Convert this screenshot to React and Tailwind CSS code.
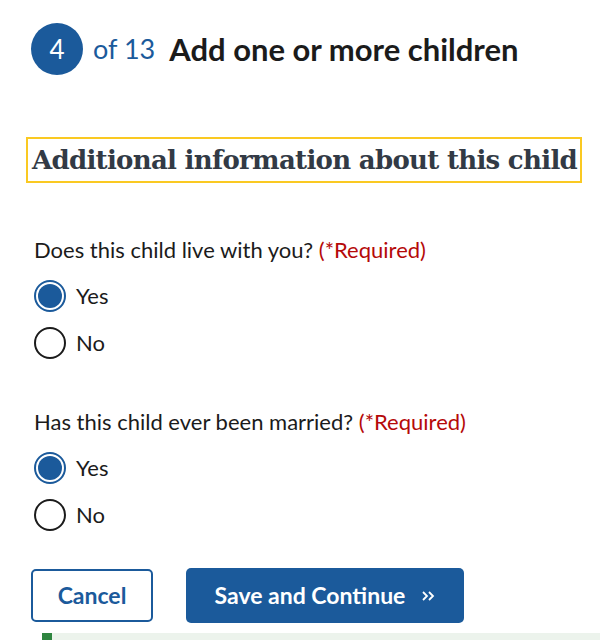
import React from "react";

const sans = { fontFamily: "Lato, 'Noto Sans', sans-serif" };

function Radio({ checked, label }) {
  return (
    <div className="flex items-center h-[47px]">
      {checked ? (
        <span className="w-[32px] h-[32px] rounded-full border-[2px] border-[#1b5a9b] flex items-center justify-center">
          <span className="w-[24px] h-[24px] rounded-full bg-[#1b5a9b]" />
        </span>
      ) : (
        <span className="w-[32px] h-[32px] rounded-full border-[2px] border-[#1b1b1b]" />
      )}
      <span className="ml-[10px] text-[22px] text-[#1b1b1b]">{label}</span>
    </div>
  );
}

function Question({ text }) {
  return (
    <div>
      <div className="text-[22px] text-[#1b1b1b] leading-[28px] whitespace-nowrap">
        {text} <span className="text-[#b50909]">(*Required)</span>
      </div>
      <div className="mt-[8px]">
        <Radio checked label="Yes" />
        <Radio label="No" />
      </div>
    </div>
  );
}

export default function App() {
  return (
    <div className="w-[600px] h-[640px] bg-white overflow-hidden relative" style={sans}>
      <div className="pl-[31px] pt-[23px] flex items-center">
        <div className="w-[52px] h-[52px] rounded-full bg-[#1b5a9b] text-white flex items-center justify-center text-[26px]">
          4
        </div>
        <span className="ml-[10px] text-[27px] text-[#1b5a9b]">of 13</span>
        <span className="ml-[14px] text-[31px] font-bold text-[#1b1b1b] whitespace-nowrap">
          Add one or more children
        </span>
      </div>

      <div className="ml-[26px] mt-[62px] w-[556px] h-[46px] border-[2px] border-[#fac922] flex items-center pl-[4px]">
        <span
          className="text-[26px] font-bold text-[#323a45] whitespace-nowrap"
          style={{ fontFamily: "'DejaVu Serif', serif", letterSpacing: "-0.7px" }}
        >
          Additional information about this child
        </span>
      </div>

      <div className="pl-[34px] mt-[53px]">
        <Question text="Does this child live with you?" />
      </div>
      <div className="pl-[34px] mt-[42px]">
        <Question text="Has this child ever been married?" />
      </div>

      <div className="pl-[31px] mt-[30px] flex items-center">
        <button className="w-[122px] h-[53px] border-[2px] border-[#1b5a9b] rounded-[5px] text-[#1b5a9b] font-bold text-[23px]">
          Cancel
        </button>
        <button className="ml-[33px] w-[278px] h-[55px] bg-[#1b5a9b] rounded-[5px] text-white font-bold text-[23px] flex items-center justify-center">
          Save and Continue
          <svg className="ml-[16px]" width="14" height="14" viewBox="0 0 14 14" fill="none" stroke="white" strokeWidth="1.8">
            <path d="M2 3l4 4-4 4M8 3l4 4-4 4" />
          </svg>
        </button>
      </div>

      <div className="absolute left-[42px] right-0 top-[633px] h-[20px] bg-[#ecf3ec] border-l-[10px] border-[#2e8540]" />
    </div>
  );
}
